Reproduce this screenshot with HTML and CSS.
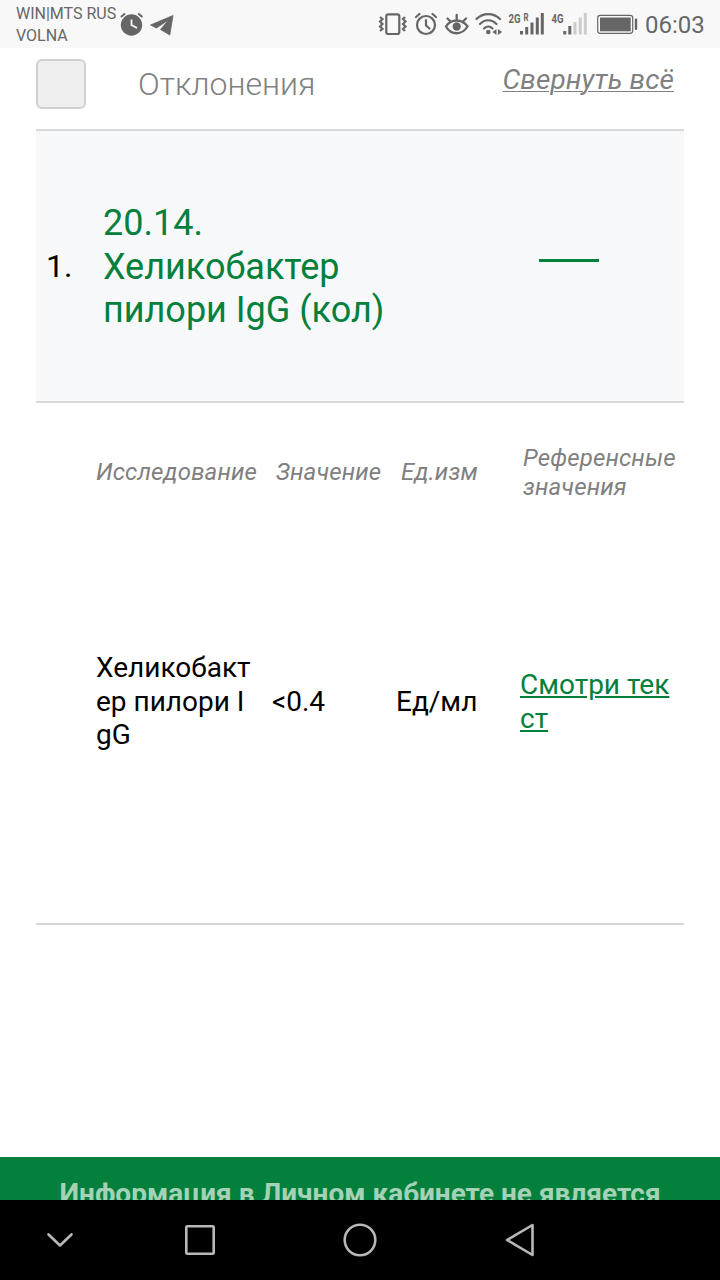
FILE: index.html
```
<!DOCTYPE html>
<html lang="ru">
<head>
    <meta charset="UTF-8">
    <meta name="viewport" content="width=device-width, initial-scale=1.0">
    <title>Личный кабинет - Результаты</title>
    <link rel="stylesheet" href="styles.css">
</head>
<body>
    <header class="status-bar">
        <div class="carrier">WIN|MTS RUS<br>VOLNA</div>
        <svg class="notify-icons" width="60" height="48" viewBox="118 0 60 48">
            <circle cx="131.5" cy="25" r="10.7" fill="#666"/>
            <path d="M121.5 16.5l3-2.500M138.800 14l3 2.500" stroke="#666" stroke-width="2" stroke-linecap="round"/>
            <path d="M131.500 19.500v5.500l5.500 3" fill="none" stroke="#f8f8f8" stroke-width="1.800"/>
            <path d="M150.500 25L173 15.500L169.800 35L160.500 29.500L168.500 20L156.500 28Z" fill="#666" stroke="#666" stroke-width=".8" stroke-linejoin="round"/>
        </svg>
        <svg class="system-icons" width="266" height="48" viewBox="374 0 266 48">
            <!-- vibration -->
            <rect x="386.300" y="14.300" width="13" height="19.700" rx="2" fill="none" stroke="#666" stroke-width="2.200"/>
            <path d="M380 17l2.500 2-2.500 2.500 2.500 2.500-2.500 2.500 2.500 2.500-2.500 2M405 17l-2 2 2.500 2.500-2.500 2.500 2.500 2.500-2.500 2.500 2 2" fill="none" stroke="#666" stroke-width="2.200"/>
            <!-- alarm -->
            <g fill="none" stroke="#666" stroke-width="2.200" stroke-linecap="round">
                <circle cx="426" cy="25" r="9"/>
                <path d="M426 20v5.500l3.500 3M416 17l3.500-3M432.500 14l3.500 3"/>
            </g>
            <!-- eye -->
            <g fill="none" stroke="#666" stroke-width="2.300" stroke-linecap="round">
                <path d="M446 26.500C451 18.500 462 18.500 467.500 26.500C462 35.500 451 35.500 446 26.500ZM456.700 15v4M447.500 18.500l2.500 2.500M466 18.500l-2.500 2.500"/>
                <circle cx="456.700" cy="26.500" r="3" fill="#666"/>
            </g>
            <!-- wifi -->
            <g fill="none" stroke="#666" stroke-width="2.200" stroke-linecap="round">
                <path d="M476.500 19C483 12.500 493.500 12.500 500 19M480 24C485 19 491.500 19 496.500 24M484 28.500C486.500 26 490 26 492.500 28.500"/>
            </g>
            <circle cx="488.300" cy="32" r="2.300" fill="#666"/>
            <path d="M496.500 29v6l-4-3zM498 29v6l4-3z" fill="#666"/>
            <!-- 2G signal -->
            <text class="net" x="508.500" y="22.500" textLength="12" lengthAdjust="spacingAndGlyphs">2G</text>
            <text class="net roam" x="523.500" y="20.500" textLength="5" lengthAdjust="spacingAndGlyphs">R</text>
            <path d="M521.500 31v3.500M526.700 27v7.500M532 22.500v12M537.300 17.500v17M542.300 13v21.500" stroke="#666" stroke-width="3"/>
            <!-- 4G signal -->
            <text class="net" x="551.500" y="22.500" textLength="12" lengthAdjust="spacingAndGlyphs">4G</text>
            <path d="M564.800 31v3.500M569.800 26v8.500" stroke="#666" stroke-width="3"/>
            <path d="M575 22v12.500M580.200 17.500v17M585.300 13v21.500" stroke="#ccc" stroke-width="3"/>
            <!-- battery -->
            <rect x="597.700" y="15.300" width="35" height="18" rx="2.500" fill="none" stroke="#666" stroke-width="1.200"/>
            <rect x="600" y="17.500" width="30.700" height="13.800" fill="#666"/>
            <rect x="634.800" y="18.500" width="2.400" height="11.500" rx="1" fill="#666"/>
        </svg>
        <div class="clock">06:03</div>
    </header>

    <main class="page">
        <div class="toolbar">
            <label class="deviation"><span class="checkbox"></span>Отклонения</label>
            <a class="collapse-all" href="#">Свернуть всё</a>
        </div>

        <section class="order">
            <div class="order-number">1.</div>
            <h2 class="order-title">20.14.<br>Хеликобактер<br>пилори IgG (кол)</h2>
            <div class="order-toggle"><span class="minus"></span></div>
        </section>

        <section class="results">
            <div class="row row-head">
                <div>Исследование</div>
                <div>Значение</div>
                <div>Ед.изм</div>
                <div>Референсные<br>значения</div>
            </div>
            <div class="row row-data">
                <div>Хеликобакт<br>ер пилори I<br>gG</div>
                <div>&lt;0.4</div>
                <div>Ед/мл</div>
                <div><a class="ref-link" href="#">Смотри тек<br>ст</a></div>
            </div>
        </section>
    </main>

    <footer class="disclaimer">Информация в Личном кабинете не является</footer>

    <nav class="nav-bar">
        <svg class="nav-hide" width="40" height="40" viewBox="0 0 40 40"><path d="M8.500 14.500L20 25.500L31.500 14.500"/></svg>
        <svg width="40" height="40" viewBox="0 0 40 40"><rect x="6.300" y="6.300" width="27.400" height="27.400" rx="1"/></svg>
        <svg width="40" height="40" viewBox="0 0 40 40"><circle cx="20" cy="20" r="15.300"/></svg>
        <svg width="40" height="40" viewBox="0 0 40 40"><path d="M7 20L32.500 5V35Z"/></svg>
    </nav>
</body>
</html>
```
FILE: styles.css
```
/* General Styles */
* {
    box-sizing: border-box;
}

body {
    font-family: Roboto, Arial, sans-serif;
    margin: 0;
    height: 1280px;
    display: flex;
    flex-direction: column;
    overflow: hidden;
    background-color: #fff;
    color: #000;
}

/* Status bar */
.status-bar {
    display: flex;
    align-items: center;
    height: 48px;
    flex: none;
    background-color: #f8f8f8;
    color: #666;
}

.carrier {
    width: 102px;
    margin-left: 16px;
    font-size: 16px;
    line-height: 22px;
    padding-top: 2px;
    white-space: nowrap;
}

.system-icons {
    margin-left: 196px;
}

.net {
    font-size: 13px;
    font-weight: bold;
    fill: #666;
}

.roam {
    font-size: 10px;
}

.clock {
    margin-left: 5px;
    padding-top: 2px;
    font-size: 24px;
}

/* Page */
.page {
    flex: 1;
    padding: 0 36px;
}

.toolbar {
    display: flex;
    justify-content: space-between;
    height: 81px;
    padding-right: 10px;
    color: #808080;
}

.deviation {
    display: flex;
    align-items: center;
    height: 72px;
    font-size: 32px;
    font-weight: 300;
}

.checkbox {
    width: 50px;
    height: 50px;
    margin-right: 52px;
    background-color: #efefef;
    border: 2px solid #d0d0d0;
    border-radius: 6px;
}

.collapse-all {
    margin-top: 15px;
    font-size: 28px;
    line-height: 33px;
    letter-spacing: 0.1px;
    font-style: italic;
    color: #808080;
    text-underline-offset: 2px;
    text-decoration-thickness: 1px;
}

/* Order */
.order {
    display: grid;
    grid-template-columns: 67px 1fr 170px;
    align-items: center;
    height: 274px;
    background-color: #f7f8fa;
    border-top: 2px solid #d8d8d8;
    border-bottom: 2px solid #d8d8d8;
}

.order-number {
    padding-left: 10px;
    font-size: 32px;
}

.order-title {
    margin: 0;
    padding-top: 3px;
    font-size: 36px;
    font-weight: normal;
    line-height: 43.5px;
    color: #03803c;
}

.order-toggle {
    padding-left: 25px;
    padding-bottom: 12px;
}

.minus {
    display: block;
    width: 60px;
    height: 3px;
    background-color: #03803c;
}

/* Results */
.results {
    height: 522px;
    padding-left: 60px;
    border-bottom: 2px solid #d8d8d8;
}

.row {
    display: grid;
    align-items: center;
    white-space: nowrap;
}

.row-head {
    grid-template-columns: 180px 125px 122px 1fr;
    height: 138px;
    padding-top: 1px;
    font-size: 24px;
    line-height: 29px;
    letter-spacing: 0.15px;
    font-style: italic;
    color: #808080;
}

.row-data {
    grid-template-columns: 176px 124px 124px 1fr;
    height: 321px;
    font-size: 28px;
    line-height: 33.5px;
}

.ref-link {
    color: #03803c;
}

/* Footer */
.disclaimer {
    height: 43px;
    flex: none;
    padding-top: 20px;
    overflow: hidden;
    background-color: #03803c;
    color: #a5d2b6;
    font-size: 28px;
    font-weight: bold;
    line-height: 34px;
    text-align: center;
    white-space: nowrap;
}

/* Navigation */
.nav-bar {
    display: flex;
    align-items: center;
    gap: 120px;
    height: 80px;
    flex: none;
    padding-left: 40px;
    background-color: #000;
}

.nav-hide {
    margin-right: -20px;
}

.nav-bar svg {
    fill: none;
    stroke: #b8b8b8;
    stroke-width: 2.6;
    stroke-linejoin: round;
    stroke-linecap: round;
}
```
